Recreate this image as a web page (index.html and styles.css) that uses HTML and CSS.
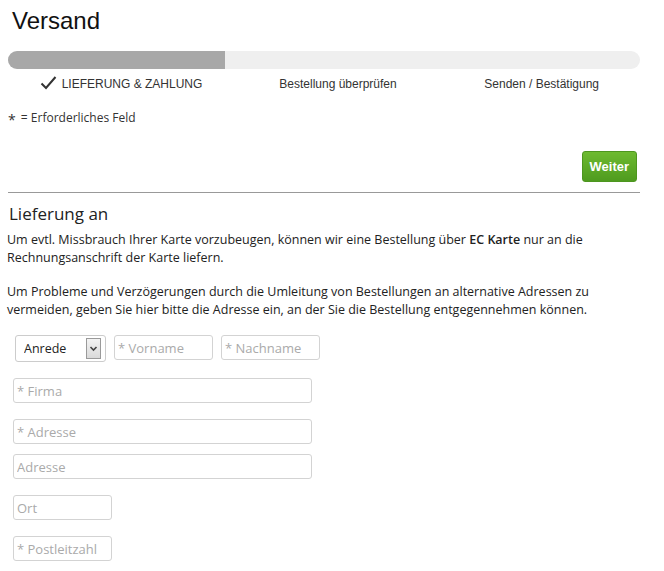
FILE: index.html
```html
<!DOCTYPE html>
<html lang="de">
<head>
    <meta charset="UTF-8">
    <title>Versand</title>
    <link rel="stylesheet" href="styles.css">
</head>
<body>
    <div class="page">
        <h1 class="title">Versand</h1>

        <div class="progress">
            <div class="progress-fill"></div>
        </div>
        <div class="steps">
            <div class="step step-done">
                <svg class="check" width="17" height="14" viewBox="0 0 17 14"><polyline points="1.5,7.5 6,12 15.5,1" fill="none" stroke="#333" stroke-width="2"/></svg>
                LIEFERUNG &amp; ZAHLUNG
            </div>
            <div class="step step-2">Bestellung überprüfen</div>
            <div class="step step-3">Senden / Bestätigung</div>
        </div>

        <p class="required-note"><span class="star">*</span> = Erforderliches Feld</p>

        <div class="actions">
            <button class="btn-next">Weiter</button>
        </div>

        <h2 class="section-title">Lieferung an</h2>
        <p class="info">Um evtl. Missbrauch Ihrer Karte vorzubeugen, können wir eine Bestellung über <b>EC Karte</b> nur an die Rechnungsanschrift der Karte liefern.</p>
        <p class="info">Um Probleme und Verzögerungen durch die Umleitung von Bestellungen an alternative Adressen zu vermeiden, geben Sie hier bitte die Adresse ein, an der Sie die Bestellung entgegennehmen können.</p>

        <form class="address">
            <div class="row row-name">
                <span class="select-wrap">
                    <select class="salutation">
                        <option>Anrede</option>
                        <option>Herr</option>
                        <option>Frau</option>
                    </select>
                    <svg class="select-btn" width="15" height="21" viewBox="0 0 15 21">
                        <defs>
                            <linearGradient id="btnGrad" x1="0" y1="0" x2="0" y2="1">
                                <stop offset="0" stop-color="#f4f4f4"/>
                                <stop offset="1" stop-color="#d9d9d9"/>
                            </linearGradient>
                        </defs>
                        <rect x="0.5" y="0.5" width="14" height="20" fill="url(#btnGrad)" stroke="#9a9a9a"/>
                        <polyline points="4.5,9 7.5,12 10.5,9" fill="none" stroke="#444" stroke-width="1.6"/>
                    </svg>
                </span>
                <input class="field field-short" type="text" placeholder="* Vorname">
                <input class="field field-short" type="text" placeholder="* Nachname">
            </div>
            <div class="row"><input class="field field-wide" type="text" placeholder="* Firma"></div>
            <div class="row"><input class="field field-wide" type="text" placeholder="* Adresse"></div>
            <div class="row row-tight"><input class="field field-wide" type="text" placeholder="Adresse"></div>
            <div class="row"><input class="field field-short" type="text" placeholder="Ort"></div>
            <div class="row"><input class="field field-short" type="text" placeholder="* Postleitzahl"></div>
        </form>
    </div>
</body>
</html>
```

FILE: styles.css
```css
body {
    margin: 0;
    padding: 0;
    background: #fff;
    color: #333;
    font-family: 'Open Sans', sans-serif;
}

.page {
    padding: 0 24px 0 8px;
}

.title {
    font-family: 'Liberation Sans', Arial, sans-serif;
    font-weight: normal;
    font-size: 24px;
    line-height: 28px;
    color: #111;
    margin: 7px 0 0 4px;
}

.progress {
    margin-top: 16px;
    height: 18px;
    background: #efefef;
    border-radius: 9px;
    overflow: hidden;
}

.progress-fill {
    width: 217px;
    height: 100%;
    background: #a8a8a8;
}

.steps {
    display: grid;
    grid-template-columns: 1fr 1fr 1fr;
    margin-top: 7px;
    font-family: 'Liberation Sans', Arial, sans-serif;
    font-size: 12px;
    line-height: 16px;
    color: #333;
}

.step {
    text-align: center;
}

.step-done {
    padding-left: 16px;
}

.step-2 {
    padding-left: 28px;
}

.step-3 {
    padding-left: 14px;
}

.check {
    vertical-align: -2px;
    margin-right: 1px;
}

.required-note {
    margin: 18px 0 0;
    font-size: 12px;
    line-height: 16px;
}

.star {
    display: inline-block;
    font-size: 14px;
    vertical-align: -3px;
    margin-right: 2px;
}

.actions {
    display: flex;
    justify-content: flex-end;
    margin-top: 23px;
    padding-bottom: 10px;
    border-bottom: 1px solid #999;
}

.btn-next {
    height: 31px;
    padding: 0 7px;
    margin-right: 3px;
    border: 1px solid #4d961f;
    border-radius: 3px;
    background: linear-gradient(#6dba30, #4f9b1f);
    color: #fff;
    font-family: 'Liberation Sans', Arial, sans-serif;
    font-weight: bold;
    font-size: 13px;
}

.section-title {
    font-weight: normal;
    font-size: 17px;
    line-height: 22px;
    margin: 10px 0 0 1px;
    color: #222;
}

.info {
    max-width: 600px;
    font-size: 12.5px;
    line-height: 18px;
    margin: 0 0 16px -1px;
    color: #222;
}

.section-title + .info {
    margin-top: 6px;
}

.info b {
    font-weight: 600;
}

.row {
    display: flex;
    gap: 8px;
    margin-bottom: 16px;
    padding-left: 5px;
}

.row-name {
    padding-left: 7px;
    align-items: flex-start;
}

.row-tight {
    margin-top: -6px;
}

.select-wrap {
    position: relative;
    display: inline-block;
}

.salutation {
    appearance: none;
    width: 91px;
    height: 27px;
    border: 1px solid #ccc;
    border-radius: 3px;
    background: #fff;
    padding: 0 0 0 8px;
    font-family: 'Open Sans', sans-serif;
    font-size: 12.5px;
    color: #222;
}

.select-btn {
    position: absolute;
    top: 3px;
    right: 5px;
    pointer-events: none;
}

.field {
    box-sizing: border-box;
    height: 25px;
    border: 1px solid #d3d3d3;
    border-radius: 3px;
    padding: 0 3px;
    font-family: 'Open Sans', sans-serif;
    font-size: 13px;
    color: #333;
}

.field::placeholder {
    color: #aaa;
}

.field-short {
    width: 99px;
}

.field-wide {
    width: 299px;
}
```
